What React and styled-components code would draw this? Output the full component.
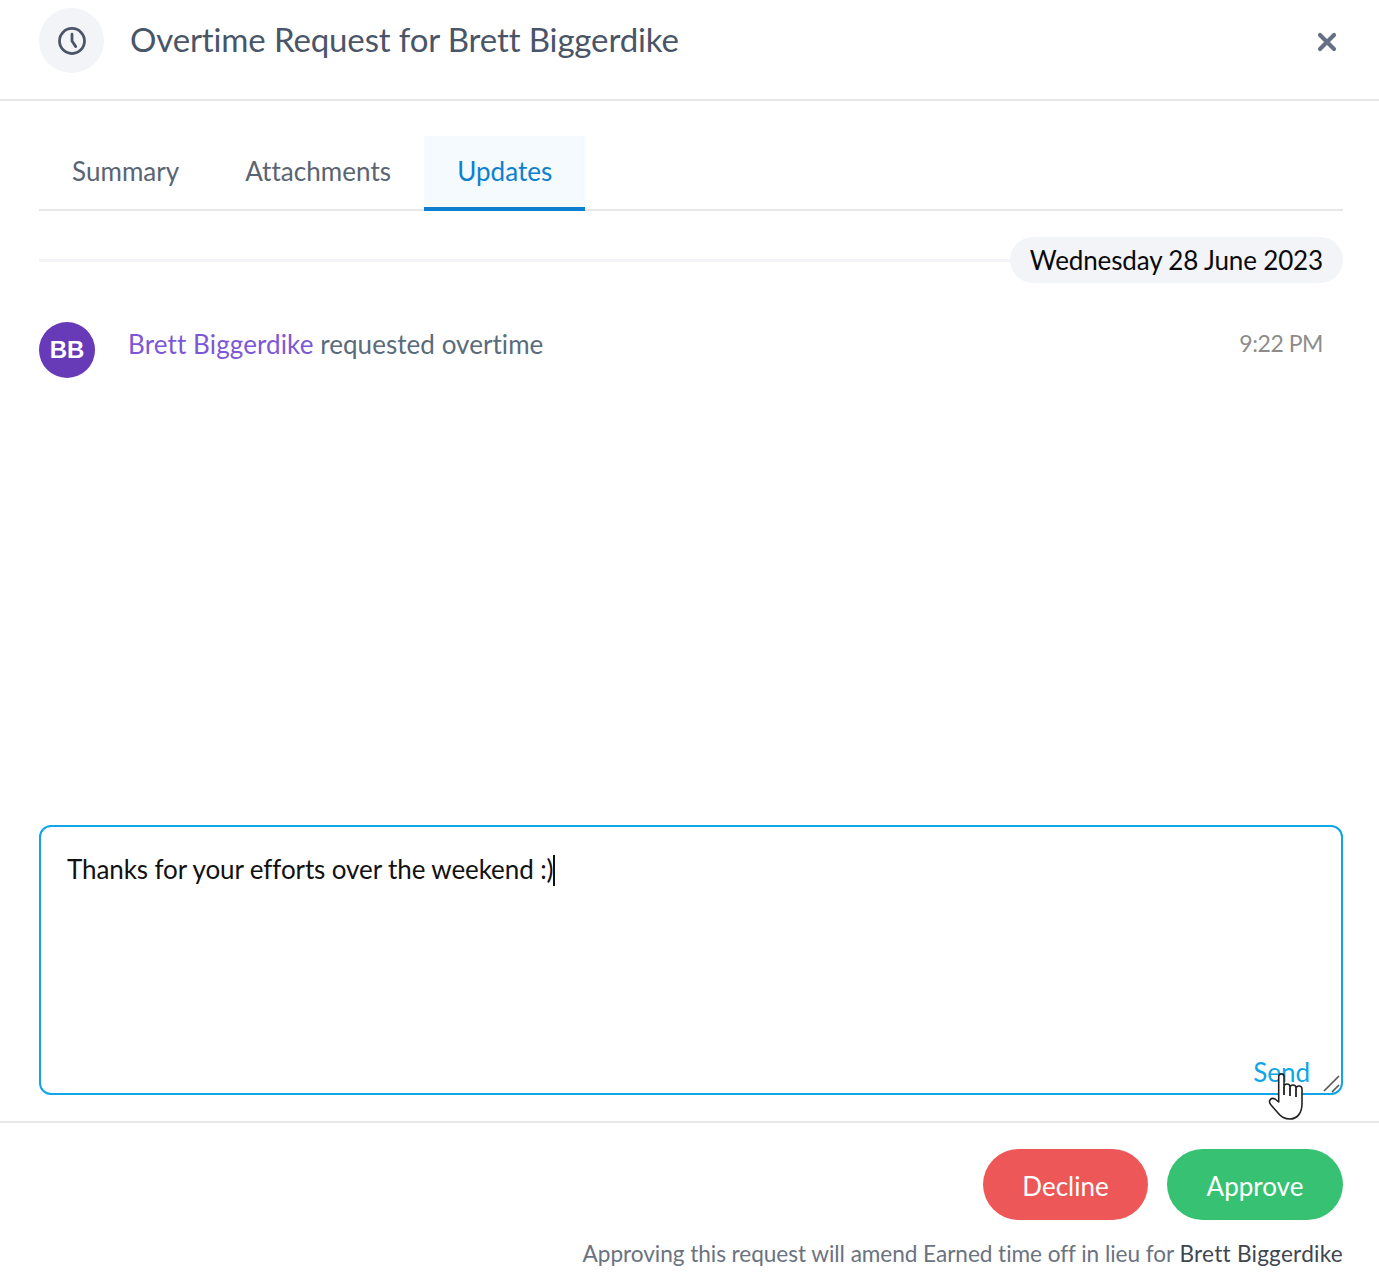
import React from 'react';
import styled, { createGlobalStyle } from 'styled-components';

const Global = createGlobalStyle`
  html, body { margin: 0; padding: 0; background: #fff; }
  body { font-family: "Lato", "Liberation Sans", sans-serif; font-variant-ligatures: none; }
  * { box-sizing: border-box; }
`;
const Page = styled.div`
  width: 1379px; height: 1277px; overflow: hidden; display: flex; flex-direction: column; background: #fff;
`;
const Header = styled.header`
  height: 101px; flex: none; display: flex; align-items: flex-start; padding: 8px 39px 0; border-bottom: 2px solid #e7e7e9;
`;
const IconCircle = styled.div`
  width: 65px; height: 65px; border-radius: 50%; background: #f2f4f8; display: flex; align-items: center; justify-content: center; flex: none; color: #4a5568;
`;
const Title = styled.h1`
  margin: 0 0 0 26px; font-size: 33px; line-height: 63px; font-weight: 400; color: #4a5568; flex: 1; letter-spacing: -0.13px;
`;
const Close = styled.div`
  width: 22px; height: 22px; margin: 23px 2px 0 0; color: #667085; display: flex; align-items: center; justify-content: center;
`;
const Body = styled.main`
  flex: 1; display: flex; flex-direction: column; padding: 35px 36px 0 39px; min-height: 0;
`;
const Tabs = styled.nav`
  display: flex; height: 75px; flex: none; border-bottom: 2px solid #e7e7e9;
`;
const Tab = styled.div`
  height: 75px; padding: 0 33px; font-size: 26px; line-height: 71px; letter-spacing: 0.05px; color: ${p => p.$active ? '#0d7fce' : '#5a6472'};
  background: ${p => p.$active ? '#f5fafe' : 'transparent'};
  border-bottom: ${p => p.$active ? '4px solid #0d7fce' : '0'};
`;
const DateRow = styled.div`
  display: flex; align-items: center; margin-top: 26px; height: 46px; flex: none;
`;
const DateLine = styled.div`
  flex: 1; height: 3px; background: #f4f4f8;
`;
const DatePill = styled.div`
  height: 46px; padding: 0 20px; border-radius: 23px; background: #f2f4f8; font-size: 26px; line-height: 46px; color: #0a0a0a; white-space: nowrap; letter-spacing: -0.14px;
`;
const Event = styled.div`
  display: flex; align-items: flex-start; margin-top: 39px; flex: none;
`;
const Avatar = styled.div`
  width: 56px; height: 56px; border-radius: 50%; background: #673ab7; color: #fff; font-family: "Liberation Sans", sans-serif; font-weight: 700; font-size: 24px; display: flex; align-items: center; justify-content: center; flex: none;
`;
const EventText = styled.div`
  margin-left: 33px; flex: 1; font-size: 26px; line-height: 45px; color: #5a6b7b; letter-spacing: 0.05px;
`;
const Actor = styled.span`
  color: #7e57d6; letter-spacing: 0.12px;
`;
const Time = styled.div`
  font-size: 23px; line-height: 43px; color: #8c8c8c; margin-right: 20px; letter-spacing: -0.45px;
`;
const Composer = styled.div`
  position: relative; margin-top: auto; height: 270px; flex: none; border: 2px solid #0ea5e9; border-radius: 12px; padding: 23px 26px; font-size: 26px; line-height: 38px; color: #111; letter-spacing: -0.1px;
`;
const Caret = styled.span`
  display: inline-block; width: 2px; height: 31px; background: #111; vertical-align: -7px; margin-left: 0;
`;
const Send = styled.div`
  position: absolute; right: 21px; bottom: 0; padding: 0 10px 0 9px; background: #fff; font-size: 26px; line-height: 38px; height: 40px; color: #0ea5e9; letter-spacing: 0;
`;
const Grip = styled.svg`
  position: absolute; right: 0; bottom: 0;
`;
const Pointer = styled.svg`
  position: absolute; right: 37px; bottom: -29px;
`;
const Footer = styled.footer`
  margin-top: 26px; flex: none; height: 156px; border-top: 2px solid #e7e7e9; padding: 26px 36px 0 39px; display: flex; flex-direction: column; align-items: flex-end;
`;
const Buttons = styled.div`
  display: flex; gap: 19px;
`;
const Btn = styled.div`
  height: 71px; width: ${p => p.$w}px; border-radius: 36px; background: ${p => p.$bg}; color: #fff; font-size: 26px; padding-top: 2px; display: flex; align-items: center; justify-content: center;
`;
const Note = styled.div`
  margin-top: 19px; font-size: 22.6px; line-height: 30px; color: #6b7280; white-space: nowrap; letter-spacing: -0.05px;
`;
const Strong = styled.span`
  color: #3f4650; letter-spacing: 0.25px;
`;

export default function App() {
  return (
    <Page>
      <Global />
      <Header>
        <IconCircle>
          <svg width="30" height="30" viewBox="0 0 24 24" fill="none" stroke="currentColor" strokeWidth="2.2" strokeLinecap="round" strokeLinejoin="round">
            <circle cx="12" cy="12" r="10" />
            <path d="M12 6.5V12l3 4.5" />
          </svg>
        </IconCircle>
        <Title>Overtime Request for Brett Biggerdike</Title>
        <Close>
          <svg width="22" height="22" viewBox="0 0 22 22" fill="none" stroke="currentColor" strokeWidth="4.2" strokeLinecap="round">
            <path d="M4 4l14 14M18 4L4 18" />
          </svg>
        </Close>
      </Header>
      <Body>
        <Tabs>
          <Tab>Summary</Tab>
          <Tab>Attachments</Tab>
          <Tab $active>Updates</Tab>
        </Tabs>
        <DateRow>
          <DateLine />
          <DatePill>Wednesday 28 June 2023</DatePill>
        </DateRow>
        <Event>
          <Avatar>BB</Avatar>
          <EventText><Actor>Brett Biggerdike</Actor> requested overtime</EventText>
          <Time>9:22 PM</Time>
        </Event>
        <Composer>
          Thanks for your efforts over the weekend :)<Caret />
          <Send>Send</Send>
          <Grip width="20" height="20" viewBox="0 0 20 20" fill="none" stroke="#555" strokeWidth="1.6">
            <path d="M3 18L18 3M11 19l7-7" />
          </Grip>
          <Pointer width="38" height="50" viewBox="0 0 38 50">
            <path d="M12.7 30V4.5a2.65 2.65 0 0 1 5.3 0V15a3 3 0 0 1 6 0v1a3 3 0 0 1 6 0v1a3 3 0 0 1 6 0v15c0 9-5 15-12 15-6 0-9-2-12-6l-7-8c-3.5-4 0-8 4-6z" fill="#fff" stroke="#222" strokeWidth="1.6" strokeLinejoin="round" />
            <path d="M18 15v8M24 16v8M30 17v8" stroke="#222" strokeWidth="1.8" fill="none" />
          </Pointer>
        </Composer>
      </Body>
      <Footer>
        <Buttons>
          <Btn $w={165} $bg="#ed5757">Decline</Btn>
          <Btn $w={176} $bg="#36c272">Approve</Btn>
        </Buttons>
        <Note>Approving this request will amend Earned time off in lieu for <Strong>Brett Biggerdike</Strong></Note>
      </Footer>
    </Page>
  );
}
